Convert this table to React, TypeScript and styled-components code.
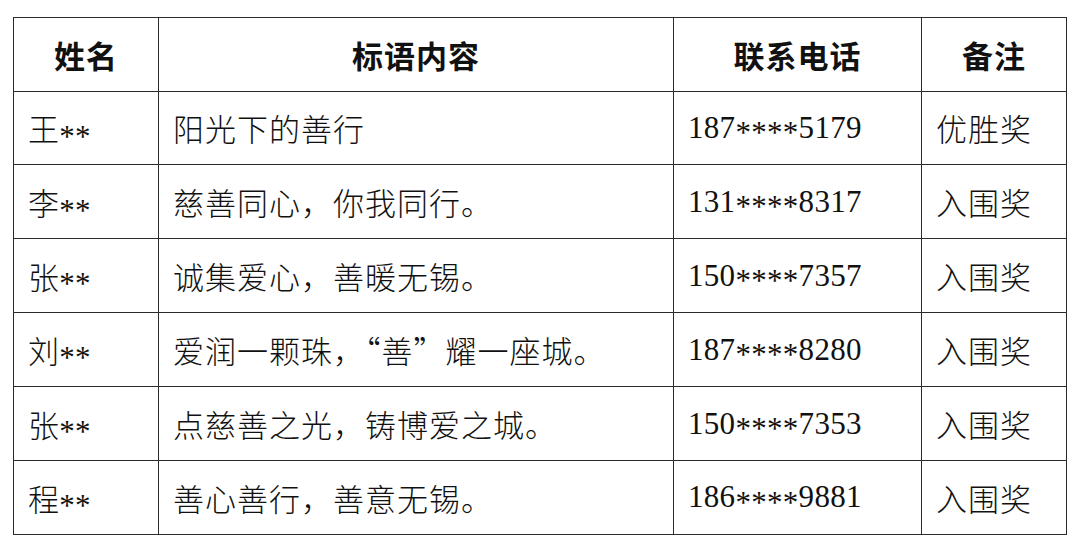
import styled, { createGlobalStyle } from 'styled-components';

const GlobalStyle = createGlobalStyle`
  html, body {
    margin: 0;
    padding: 0;
    background: #fff;
  }
`;

const Page = styled.div`
  padding: 17px 14px 12px 13px;
  background: #fff;
`;

const Table = styled.table`
  width: 1053px;
  border-collapse: collapse;
  table-layout: fixed;
  color: #111;
`;

const HeadCell = styled.th`
  height: 72.5px;
  padding: 0;
  border: 1.5px solid #2b2b2b;
  text-align: center;
  vertical-align: middle;
  font-family: 'Noto Sans CJK SC', sans-serif;
  font-size: 31px;
  font-weight: 700;
  letter-spacing: 1px;
`;

const Cell = styled.td<{ $cjk?: boolean }>`
  height: 72.9px;
  padding: 0 0 0 14px;
  border: 1.5px solid #2b2b2b;
  text-align: left;
  vertical-align: middle;
  white-space: nowrap;
  font-family: ${(p) =>
    p.$cjk
      ? `'Noto Sans CJK SC', 'Liberation Serif', serif`
      : `'Liberation Serif', 'Noto Sans CJK SC', serif`};
  font-size: 31px;
  font-weight: 300;
  letter-spacing: ${(p) => (p.$cjk ? '1px' : '0.3px')};
`;

// the asterisks in the source sit on the middle of the line, not raised
const Stars = styled.span`
  position: relative;
  top: 0.17em;
`;

const rows = [
  { name: '王', slogan: '阳光下的善行', phone: ['187', '5179'], note: '优胜奖' },
  { name: '李', slogan: '慈善同心，你我同行。', phone: ['131', '8317'], note: '入围奖' },
  { name: '张', slogan: '诚集爱心，善暖无锡。', phone: ['150', '7357'], note: '入围奖' },
  { name: '刘', slogan: '爱润一颗珠，“善”耀一座城。', phone: ['187', '8280'], note: '入围奖' },
  { name: '张', slogan: '点慈善之光，铸博爱之城。', phone: ['150', '7353'], note: '入围奖' },
  { name: '程', slogan: '善心善行，善意无锡。', phone: ['186', '9881'], note: '入围奖' },
];

export default function App() {
  return (
    <Page>
      <GlobalStyle />
      <Table>
        <colgroup>
          <col style={{ width: 145 }} />
          <col style={{ width: 515 }} />
          <col style={{ width: 248 }} />
          <col style={{ width: 145 }} />
        </colgroup>
        <thead>
          <tr>
            <HeadCell>姓名</HeadCell>
            <HeadCell>标语内容</HeadCell>
            <HeadCell>联系电话</HeadCell>
            <HeadCell>备注</HeadCell>
          </tr>
        </thead>
        <tbody>
          {rows.map((r, i) => (
            <tr key={i}>
              <Cell>
                {r.name}
                <Stars>**</Stars>
              </Cell>
              <Cell $cjk>{r.slogan}</Cell>
              <Cell>
                {r.phone[0]}
                <Stars>****</Stars>
                {r.phone[1]}
              </Cell>
              <Cell $cjk>{r.note}</Cell>
            </tr>
          ))}
        </tbody>
      </Table>
    </Page>
  );
}
